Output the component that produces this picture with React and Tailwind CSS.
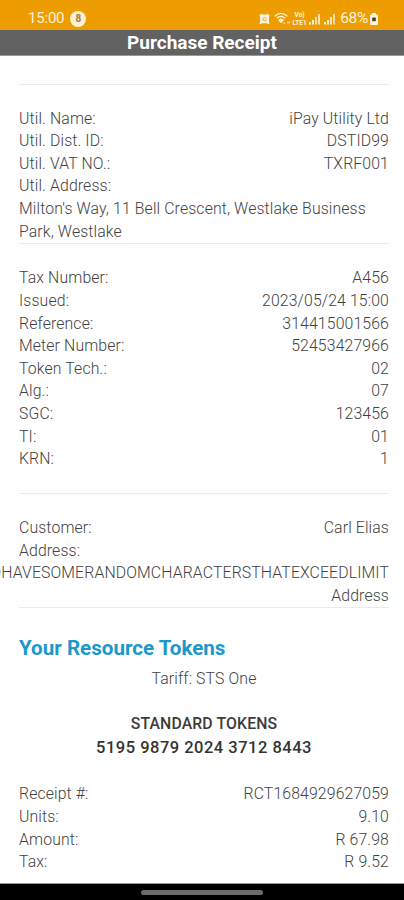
import React from 'react';

const utility = [
  ['Util. Name:', 'iPay Utility Ltd'],
  ['Util. Dist. ID:', 'DSTID99'],
  ['Util. VAT NO.:', 'TXRF001'],
  ['Util. Address:', ''],
];

const details = [
  ['Tax Number:', 'A456'],
  ['Issued:', '2023/05/24 15:00'],
  ['Reference:', '314415001566'],
  ['Meter Number:', '52453427966'],
  ['Token Tech.:', '02'],
  ['Alg.:', '07'],
  ['SGC:', '123456'],
  ['TI:', '01'],
  ['KRN:', '1'],
];

const customer = [
  ['Customer:', 'Carl Elias'],
  ['Address:', ''],
];

const totals = [
  ['Receipt #:', 'RCT1684929627059'],
  ['Units:', '9.10'],
  ['Amount:', 'R 67.98'],
  ['Tax:', 'R 9.52'],
];

const Rows = ({ items }) =>
  items.map(([label, value]) => (
    <div key={label} className="flex justify-between h-[22.6px] whitespace-nowrap">
      <span>{label}</span>
      <span>{value}</span>
    </div>
  ));

const Divider = () => <hr className="h-px border-0 bg-[#ebebeb]" />;

const Signal = () => (
  <svg className="w-[12px] h-[12px]" viewBox="0 0 12 12" fill="#fff3da">
    <rect x="0" y="9" width="2" height="2.500" />
    <rect x="3" y="7" width="2" height="4.500" />
    <rect x="6" y="4" width="2" height="7.500" opacity=".8" />
    <rect x="9" y="1" width="2" height="10.500" opacity=".8" />
  </svg>
);

const StatusBar = () => (
  <div className="flex items-center h-[30px] pt-[7px] pl-[28px] pr-[26px] bg-[#ee9d00] text-[#fff3da]">
    <span className="text-[15px] leading-none tracking-[-0.2px]">15:00</span>
    <span className="ml-[6px] flex items-center justify-center w-[16px] h-[16px] rounded-full bg-[#fff0d2] text-[#a77a38] text-[10px] font-bold leading-none">
      8
    </span>
    <div className="ml-auto flex items-center">
      <svg className="w-[11px] h-[12px]" viewBox="0 0 11 12" fill="#fff3da">
        <path d="M.2 2.800L2.500.6l1 1h4l1-1 2.300 2.200-.8 1v5l.5 2.200H9l-.8-.7H2.800l-.8.7H.5L1 8.800v-5z" />
        <circle cx="5.500" cy="6.300" r="2.200" fill="#f5c262" />
        <path d="M5.500 5v1.500h1.300" fill="none" stroke="#fff3da" strokeWidth=".9" />
      </svg>
      <svg className="ml-[4px] w-[17px] h-[14px]" viewBox="0 0 17 14" fill="none" stroke="#fff3da" strokeWidth="1.300">
        <path d="M.6 4.200Q7 -1.500 13.400 4.200" />
        <path d="M2.800 6.200Q7 2.500 11.200 6.200" />
        <path d="M5 8.200Q7 6.300 9 8.200L7 10.300z" fill="#fff3da" />
        <path d="M9.500 10.500l1.500 1.500M13 10.500h3" opacity=".7" />
      </svg>
      <span className="ml-px flex flex-col items-center w-[15px] text-[6.5px] font-bold leading-[8px]">
        <span className="h-[8px]">Vo)</span>
        <span className="h-[7px]">LTE1</span>
      </span>
      <span className="ml-[2px] flex gap-[3px]">
        <Signal />
        <Signal />
      </span>
      <span className="ml-[4px] text-[15.5px] leading-none tracking-[-0.3px]">68%</span>
      <svg className="ml-[2px] w-[8px] h-[12px]" viewBox="0 0 8 12">
        <path d="M2 0h4v1.500h1q1 0 1 1V11q0 1-1 1H1q-1 0-1-1V2.500q0-1 1-1h1z" fill="#fff3da" />
        <rect x="2.200" y="4.500" width="3.600" height="3.800" rx=".8" fill="#513d20" />
      </svg>
    </div>
  </div>
);

const App = () => (
  <div className="flex flex-col w-full h-[900px] overflow-hidden bg-white font-['Roboto',sans-serif] text-[#424242]">
    <StatusBar />
    <header className="h-[26px] bg-[#626262] border-b border-[#999] text-center text-[19px] font-bold leading-[25px] text-white">
      Purchase Receipt
    </header>

    <main className="flex-1 flex flex-col pt-[28px] pl-[19px] pr-[15px] text-[15.8px] font-light leading-[22.6px] tracking-[0.13px]">
      <Divider />
      <section className="pt-[22.6px]">
        <Rows items={utility} />
        <p className="h-[45.4px]">Milton's Way, 11 Bell Crescent, Westlake Business Park, Westlake</p>
        <Divider />
      </section>

      <section className="pt-[23px] pb-[22px]">
        <Rows items={details} />
      </section>
      <Divider />

      <section className="pt-[23.5px]">
        <Rows items={customer} />
        {/* long address lines run off the left edge of the screen */}
        <div className="flex justify-end h-[22.6px] whitespace-nowrap">
          <span>DHAVESOMERANDOMCHARACTERSTHATEXCEEDLIMIT</span>
        </div>
        <p className="h-[22.1px] text-right">Address</p>
        <Divider />
      </section>

      <section className="pt-[26px]">
        <h2 className="text-[20.6px] font-bold leading-[28px] tracking-normal text-[#1c98cb]">Your Resource Tokens</h2>
        <p className="pt-[6px] text-center">Tariff: STS One</p>
        <h3 className="pt-[22px] text-center font-medium text-[#3c3c3c]">STANDARD TOKENS</h3>
        <p className="pt-[2px] text-center text-[16.5px] font-medium tracking-[0.5px] text-[#333]">
          5195 9879 2024 3712 8443
        </p>
      </section>

      <section className="pt-[23.5px]">
        <Rows items={totals} />
      </section>
    </main>

    <nav className="flex justify-center h-[17px] pt-[6px] bg-black border-t border-[#999]">
      <span className="w-[122px] h-[5px] rounded-full bg-[#6b6b6b]" />
    </nav>
  </div>
);

export default App;
